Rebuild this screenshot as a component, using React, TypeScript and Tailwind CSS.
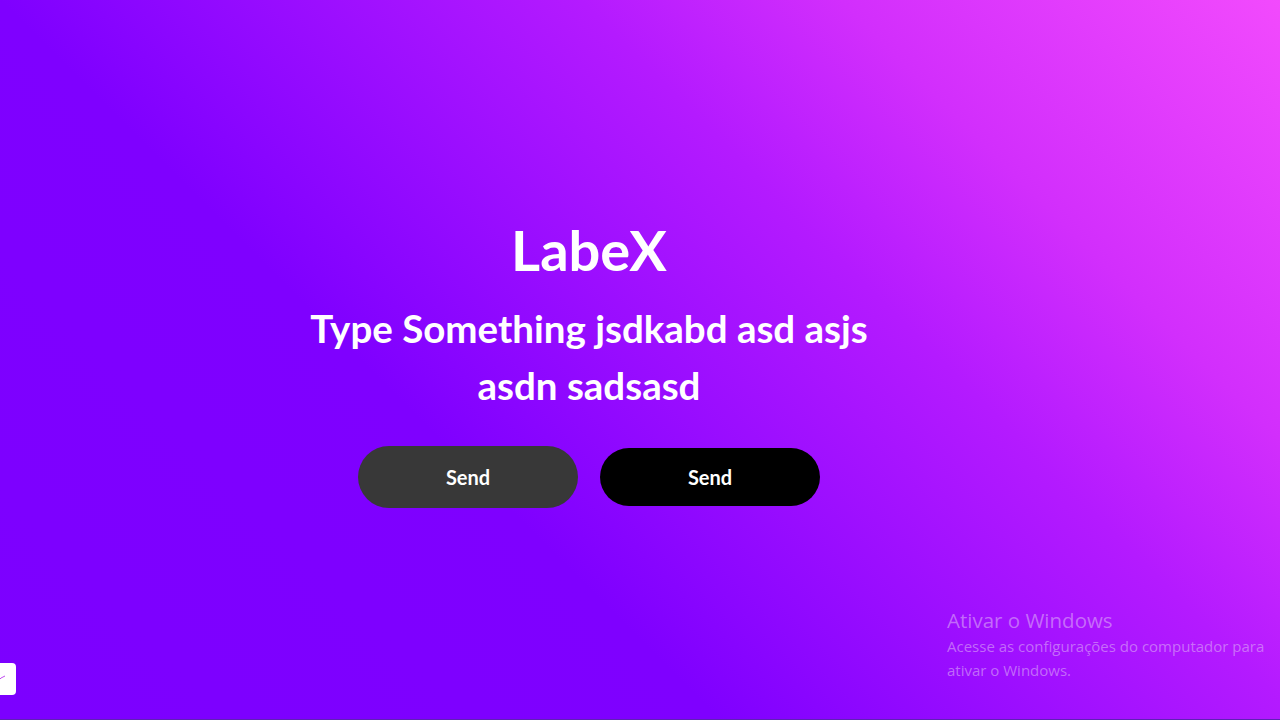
import React from "react";

export default function App() {
    return (
        <div className="relative h-[720px] w-[1280px] overflow-hidden bg-[linear-gradient(45deg,#7c00ff_0%,#7f00ff_36%,#b41aff_65%,#d22efc_78%,#f24afd_100%)] font-['Lato','Liberation_Sans',sans-serif] text-white">
            <div className="flex h-full flex-col items-center justify-center pr-[102px] pt-[6px]">
                <h1 className="text-[56px] font-bold leading-[64px]">LabeX</h1>
                <p className="mt-[18px] w-[620px] text-center text-[38.5px] font-bold leading-[57px]">
                    Type Something jsdkabd asd asjs asdn sadsasd
                </p>
                <div className="mt-[32px] flex items-center gap-[22px]">
                    <button className="h-[62px] w-[220px] rounded-full bg-[#383838] text-[20px] font-bold">Send</button>
                    <button className="h-[58px] w-[220px] rounded-full bg-black text-[20px] font-bold">Send</button>
                </div>
            </div>

            <div className="absolute left-[947px] top-[606px] font-['Open_Sans','Noto_Sans',sans-serif] text-[#dca8f6]/60">
                <div className="text-[20.5px] leading-[28px]">Ativar o Windows</div>
                <div className="text-[15px] leading-[24px]">Acesse as configurações do computador para</div>
                <div className="text-[15px] leading-[24px]">ativar o Windows.</div>
            </div>

            <div className="absolute left-[-8px] top-[663px] flex h-[32px] w-[24px] items-center justify-start rounded-[4px] bg-white pl-[6px]">
                <svg width="8" height="8" viewBox="0 0 8 8" fill="none">
                    <path d="M1 5 L3 3 M3 3 L7 1" stroke="#c04cf0" strokeWidth="1" />
                </svg>
            </div>

            <div className="absolute bottom-0 left-0 h-[1px] w-full bg-[#5e22b4]" />
        </div>
    );
}
